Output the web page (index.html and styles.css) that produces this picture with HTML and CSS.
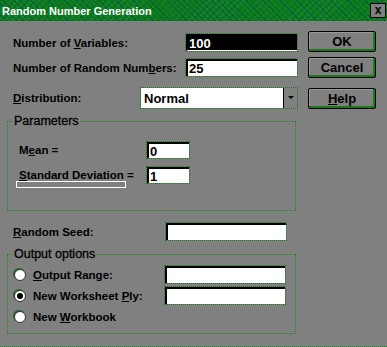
FILE: index.html
```html
<!DOCTYPE html>
<html lang="en">
<head>
  <meta charset="UTF-8" />
  <title>Random Number Generation</title>
  <link rel="stylesheet" href="styles.css">
</head>
<body>
  <div class="titlebar">
    <span class="title">Random Number Generation</span>
    <span class="close">x</span>
  </div>

  <div class="dialog">
    <div class="left">
      <div class="row r1">
        <span class="lbl">Number of <u>V</u>ariables:</span>
        <span class="box wide sel">100</span>
      </div>
      <div class="row r2">
        <span class="lbl">Number of Random Num<u>b</u>ers:</span>
        <span class="box wide">25</span>
      </div>
      <div class="row r3">
        <span class="lbl"><u>D</u>istribution:</span>
        <span class="dropdown"><span class="dd-text">Normal</span><span class="dd-btn"></span></span>
      </div>

      <div class="group params">
        <span class="gtitle">Parameters</span>
        <div class="prow">
          <span class="lbl">M<u>e</u>an =</span>
          <span class="box small">0</span>
        </div>
        <div class="prow p2">
          <span class="lbl focus"><u>S</u>tandard Deviation =</span>
          <span class="box small">1</span>
        </div>
      </div>

      <div class="row seed">
        <span class="lbl"><u>R</u>andom Seed:</span>
        <span class="box mid"></span>
      </div>

      <div class="group output">
        <span class="gtitle">Output options</span>
        <div class="orow">
          <span class="radio"></span>
          <span class="lbl"><u>O</u>utput Range:</span>
          <span class="box mid"></span>
        </div>
        <div class="orow">
          <span class="radio on"></span>
          <span class="lbl">New Worksheet <u>P</u>ly:</span>
          <span class="box mid"></span>
        </div>
        <div class="orow last">
          <span class="radio"></span>
          <span class="lbl">New <u>W</u>orkbook</span>
        </div>
      </div>
    </div>

    <div class="right">
      <div class="btn">OK</div>
      <div class="btn">Cancel</div>
      <div class="btn help"><u>H</u>elp</div>
    </div>
  </div>

  <div class="frame-bottom"></div>
</body>
</html>
```

FILE: styles.css
```css
body {
  margin: 0;
  width: 387px;
  height: 347px;
  overflow: hidden;
  background: #808080;
  font-family: "Liberation Sans", Arial, sans-serif;
  font-weight: bold;
  font-size: 11.5px;
  color: #000;
}
u { text-decoration: underline; text-underline-offset: 1px; }
.lbl { white-space: nowrap; flex-shrink: 0; }

.titlebar {
  height: 21px;
  display: flex;
  align-items: center;
  justify-content: space-between;
  background-color: #0c7d14;
  background-image:
    repeating-linear-gradient(45deg, rgba(0,40,140,0.35) 0 1px, transparent 1px 4px),
    repeating-linear-gradient(-45deg, rgba(60,160,160,0.25) 0 1px, transparent 1px 5px);
}
.title { color: #fff; font-size: 11px; padding-left: 2px; margin-top: 1px; }
.close {
  box-sizing: border-box;
  width: 16px;
  height: 15px;
  margin-right: 1px;
  background: #808080;
  border: 1px solid #000;
  font-size: 12px;
  line-height: 12px;
  text-align: center;
}

.dialog { display: flex; padding-left: 7px; }
.left { width: 289px; }
.right { margin-left: 12px; padding-top: 10px; }

.row { display: flex; align-items: center; justify-content: space-between; padding-left: 6px; }
.r1 { margin-top: 13px; }
.r2 { margin-top: 8px; }
.r3 { margin-top: 12px; }

.box {
  box-sizing: border-box;
  height: 17px;
  background: #fff;
  border-top: 2px solid #000;
  border-left: 2px solid #000;
  outline: 1px dotted #1a7a1a;
  padding-left: 1px;
  font-size: 13px;
  line-height: 15px;
}
.wide { width: 111px; margin-right: -1px; }
.mid { width: 120px; margin-right: 10px; }
.small { width: 42px; height: 16px; }
.sel { background: #000; color: #fff; border-bottom: 1px solid #fff; }

.dropdown {
  display: flex;
  box-sizing: border-box;
  width: 156px;
  height: 20px;
  margin-right: -1px;
  background: #fff;
  outline: 1px dotted #1a7a1a;
}
.dd-text { flex: 1; padding: 3px 0 0 3px; font-size: 13px; }
.dd-btn {
  position: relative;
  width: 13px;
  background: #808080;
  border-left: 1px solid #000;
}
.dd-btn::after {
  content: "";
  position: absolute;
  left: 4px;
  top: 8px;
  border-left: 3px solid transparent;
  border-right: 3px solid transparent;
  border-top: 3px solid #000;
}

.group {
  position: relative;
  box-sizing: border-box;
  border: 1px dotted #138a13;
}
.gtitle {
  position: absolute;
  top: -8px;
  left: 5px;
  padding: 0 1px;
  background: #808080;
  font-size: 12.5px;
  font-weight: normal;
  -webkit-text-stroke: 0.3px #000;
}
.params { margin-top: 13px; height: 90px; padding: 20px 0 0 11px; }
.prow { display: flex; align-items: center; justify-content: space-between; width: 170px; }
.p2 { margin-top: 9px; }
.focus { position: relative; }
.focus::after {
  content: "";
  position: absolute;
  left: -3px;
  top: 12px;
  width: 108px;
  height: 5px;
  border: 1px solid #fff;
}

.seed { margin-top: 12px; }

.output { margin-top: 14px; height: 80px; width: 289px; padding: 11px 0 0 6px; }
.orow { display: flex; align-items: center; height: 17px; margin-bottom: 4px; }
.orow .lbl { flex: 1; }
.orow.last { margin-top: 1px; }
.radio {
  box-sizing: border-box;
  width: 12px;
  height: 12px;
  margin-right: 7px;
  border-radius: 50%;
  background: #fff;
  border: 1px solid #333;
  box-shadow: -1px -1px 0 #1a6a1a;
}
.radio.on { background: radial-gradient(circle, #000 0 2.5px, #2a7a2a 3px, #fff 3.5px); }

.btn {
  box-sizing: border-box;
  width: 68px;
  height: 21px;
  margin-bottom: 5px;
  border: 1px solid #000;
  border-radius: 2px;
  box-shadow: inset -2px -2px 0 #197a19, inset 1px 1px 0 #999;
  text-align: center;
  font-size: 13px;
  line-height: 19px;
}
.btn.help { margin-top: 10px; }

.frame-bottom {
  margin-top: 12px;
  border-top: 1px dotted #118a11;
}
```
